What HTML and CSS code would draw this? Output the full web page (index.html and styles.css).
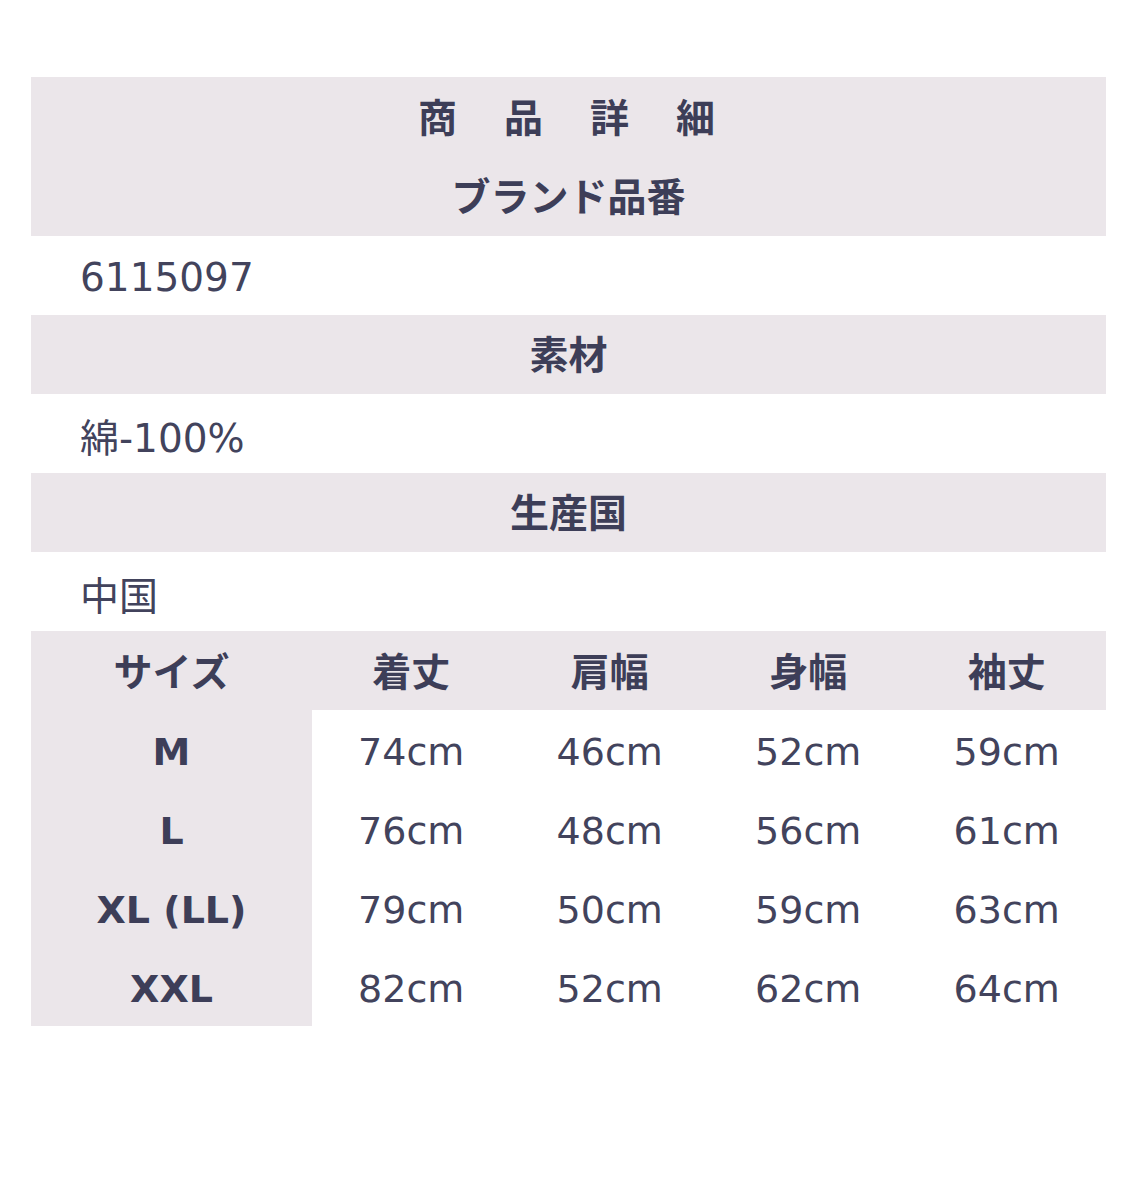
FILE: index.html
```html
<!DOCTYPE html>
<html lang="ja">
<head>
<meta charset="utf-8">
<link rel="stylesheet" href="styles.css">
</head>
<body>
<div class="sheet">
  <div class="row head title">商　品　詳　細</div>
  <div class="row head">ブランド品番</div>
  <div class="row value">6115097</div>
  <div class="row head">素材</div>
  <div class="row value">綿-100%</div>
  <div class="row head">生産国</div>
  <div class="row value">中国</div>
  <div class="sizes">
    <div class="cell th">サイズ</div>
    <div class="cell th">着丈</div>
    <div class="cell th">肩幅</div>
    <div class="cell th">身幅</div>
    <div class="cell th">袖丈</div>

    <div class="cell sz">M</div>
    <div class="cell">74cm</div>
    <div class="cell">46cm</div>
    <div class="cell">52cm</div>
    <div class="cell">59cm</div>

    <div class="cell sz">L</div>
    <div class="cell">76cm</div>
    <div class="cell">48cm</div>
    <div class="cell">56cm</div>
    <div class="cell">61cm</div>

    <div class="cell sz">XL (LL)</div>
    <div class="cell">79cm</div>
    <div class="cell">50cm</div>
    <div class="cell">59cm</div>
    <div class="cell">63cm</div>

    <div class="cell sz">XXL</div>
    <div class="cell">82cm</div>
    <div class="cell">52cm</div>
    <div class="cell">62cm</div>
    <div class="cell">64cm</div>
  </div>
</div>
</body>
</html>
```
FILE: styles.css
```css
html, body {
  margin: 0;
  padding: 0;
  background: #ffffff;
}
body {
  padding: 77px 37px 0 31px;
  font-family: "DejaVu Sans", "Noto Sans CJK JP", sans-serif;
  color: #3d3e58;
}
.sheet {
  width: 1075px;
}
.row {
  height: 79px;
  display: flex;
  align-items: center;
  box-sizing: border-box;
  font-size: 38px;
}
.head {
  background: #ebe6ea;
  justify-content: center;
  font-family: "Noto Sans CJK JP", sans-serif;
  font-weight: 700;
  font-size: 39px;
  padding-bottom: 5px;
}
.title {
  letter-spacing: 4px;
  height: 80px;
  padding-bottom: 4px;
}
.value {
  padding-left: 49px;
  padding-top: 3px;
  font-weight: 400;
  font-size: 39px;
  color: #42435c;
}
.sizes {
  display: grid;
  grid-template-columns: 281px repeat(4, 1fr);
  grid-auto-rows: 79px;
}
.cell {
  display: flex;
  align-items: center;
  justify-content: center;
  box-sizing: border-box;
  padding-top: 4px;
  font-size: 38px;
  color: #42435c;
}
.th {
  background: #ebe6ea;
  font-family: "Noto Sans CJK JP", sans-serif;
  font-weight: 700;
  font-size: 39px;
  padding-top: 0;
  padding-bottom: 4px;
  color: #3d3e58;
}
.sz {
  background: #ebe6ea;
  font-weight: 700;
  color: #3d3e58;
}
```
